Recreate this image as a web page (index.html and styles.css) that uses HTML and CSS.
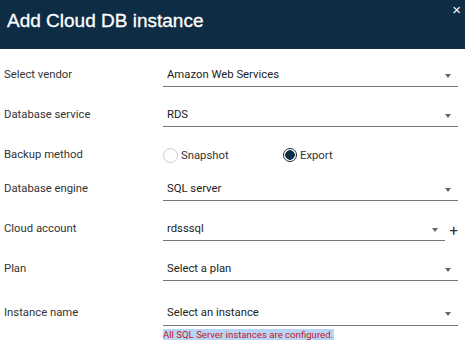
FILE: index.html
```html
<!DOCTYPE html>
<html lang="en">
<head>
    <meta charset="UTF-8">
    <title>Add Cloud DB instance</title>
    <link rel="stylesheet" href="styles.css">
</head>
<body>
    <div class="dialog">
        <div class="dialog-header">
            <h1>Add Cloud DB instance</h1>
            <button class="close" type="button">&times;</button>
        </div>

        <form class="dialog-body">
            <div class="row">
                <label>Select vendor</label>
                <div class="select">Amazon Web Services<span class="caret"></span></div>
            </div>

            <div class="row">
                <label>Database service</label>
                <div class="select">RDS<span class="caret"></span></div>
            </div>

            <div class="row row-radio">
                <label>Backup method</label>
                <div class="radios">
                    <span class="radio"><span class="dot"></span>Snapshot</span>
                    <span class="radio checked"><span class="dot"></span>Export</span>
                </div>
            </div>

            <div class="row row-tight">
                <label>Database engine</label>
                <div class="select">SQL server<span class="caret"></span></div>
            </div>

            <div class="row">
                <label>Cloud account</label>
                <div class="field-add">
                    <div class="select">rdsssql<span class="caret"></span></div>
                    <span class="plus">+</span>
                </div>
            </div>

            <div class="row">
                <label>Plan</label>
                <div class="select">Select a plan<span class="caret"></span></div>
            </div>

            <div class="row row-wide">
                <label>Instance name</label>
                <div class="field-col">
                    <div class="select">Select an instance<span class="caret"></span></div>
                    <p class="hint"><span>All SQL Server instances are configured.</span></p>
                </div>
            </div>
        </form>
    </div>
</body>
</html>
```

FILE: styles.css
```css
:root {
    --navy: #0e2d45;
    --line: #777;
    --text: #333;
}

body {
    margin: 0;
    font-family: Roboto, 'Liberation Sans', sans-serif;
    background-color: #fff;
    color: var(--text);
}

.dialog {
    width: 465px;
}

.dialog-header {
    height: 49px;
    background-color: var(--navy);
    display: flex;
    align-items: flex-start;
    justify-content: space-between;
}

h1 {
    margin: 9px 0 0 7px;
    font-family: 'Liberation Sans', Arial, sans-serif;
    font-size: 19px;
    font-weight: 500;
    color: #fff;
    line-height: 24px;
    -webkit-text-stroke: 0.3px #fff;
}

.close {
    background: none;
    border: none;
    color: #fff;
    font-family: 'Liberation Sans', Arial, sans-serif;
    font-size: 15px;
    line-height: 12px;
    padding: 4px 4px 0 0;
    cursor: pointer;
}

.dialog-body {
    display: flex;
    flex-direction: column;
    gap: 16px;
    padding: 14px 7px 0 4px;
}

.row {
    display: flex;
    align-items: flex-start;
    font-size: 11.3px;
}

.row label {
    width: 159px;
    flex-shrink: 0;
    line-height: 24px;
}

.row-tight {
    margin-top: -6px;
}

.row-wide {
    margin-top: 4px;
}

.select {
    flex: 1;
    position: relative;
    height: 23px;
    line-height: 24px;
    padding-left: 4px;
    border-bottom: 1px solid var(--line);
    color: #222;
}

.caret {
    position: absolute;
    right: 7px;
    top: 11px;
    border-left: 3.5px solid transparent;
    border-right: 3.5px solid transparent;
    border-top: 4px solid #666;
}

.field-add {
    flex: 1;
    display: flex;
    align-items: flex-start;
}

.plus {
    width: 13px;
    height: 24px;
    text-align: right;
    font-size: 15px;
    line-height: 28px;
    color: #333;
}

.field-col {
    flex: 1;
    display: flex;
    flex-direction: column;
}

.hint {
    margin: 3px 0 0;
    font-size: 9.6px;
    line-height: 12px;
    color: #c4162a;
}

.hint span {
    background-color: #b9d5f5;
    padding: 0 1px 0 0;
}

.row-radio .radios {
    display: flex;
    height: 24px;
    align-items: center;
}

.radio {
    display: flex;
    align-items: center;
    gap: 3px;
    width: 120px;
}

.dot {
    width: 13px;
    height: 13px;
    border: 1px solid #ccc;
    border-radius: 50%;
    box-sizing: content-box;
}

.radio.checked .dot {
    border: 1.5px solid var(--navy);
    width: 12px;
    height: 12px;
    background: radial-gradient(circle, var(--navy) 0 4.5px, #fff 5px);
}
```
